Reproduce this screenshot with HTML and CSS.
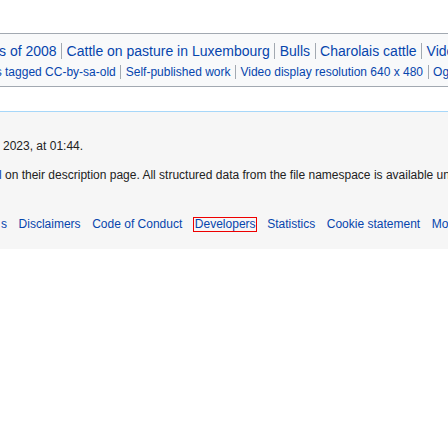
FILE: index.html
```html
<!DOCTYPE html>
<html>
<head>
<meta charset="utf-8">
<link rel="stylesheet" href="styles.css">
</head>
<body>
<div class="content">
  <div class="catlinks">
    <ul class="cats normal">
      <li class="first"><a href="#">s of 2008</a></li>
      <li><a href="#">Cattle on pasture in Luxembourg</a></li>
      <li><a href="#">Bulls</a></li>
      <li><a href="#">Charolais cattle</a></li>
      <li><a href="#">Videos of cattle</a></li>
    </ul>
    <ul class="cats hidden">
      <li class="first"><a href="#">s tagged CC-by-sa-old</a></li>
      <li><a href="#">Self-published work</a></li>
      <li><a href="#">Video display resolution 640 x 480</a></li>
      <li><a href="#">Ogg files</a></li>
    </ul>
  </div>
</div>
<div class="footer">
  <ul class="info">
    <li class="edited">2023, at 01:44.</li>
    <li class="license"><a href="#">l</a> on their description page. All structured data from the file namespace is available under the Creative Commons CC0 License.</li>
  </ul>
  <ul class="places">
    <li><a href="#">s</a></li>
    <li><a href="#">Disclaimers</a></li>
    <li><a href="#">Code of Conduct</a></li>
    <li class="focus"><a href="#">Developers</a></li>
    <li><a href="#">Statistics</a></li>
    <li><a href="#">Cookie statement</a></li>
    <li><a href="#">Mobile view</a></li>
  </ul>
</div>
</body>
</html>
```
FILE: styles.css
```css
html, body {
  margin: 0;
  padding: 0;
  background: #ffffff;
  overflow: hidden;
  font-family: "Liberation Sans", Arial, sans-serif;
  color: #222222;
}
a {
  color: #0645ad;
  text-decoration: none;
}
ul {
  list-style: none;
  margin: 0;
  padding: 0;
}
.content {
  height: 112px;
  box-sizing: border-box;
  padding-top: 33px;
  border-bottom: 1px solid #a7d7f9;
  background: #ffffff;
}
.catlinks {
  margin-left: -20px;
  width: 900px;
  height: 54px;
  box-sizing: border-box;
  border: 1px solid #a2a9b1;
  background: #f8f9fa;
  display: flex;
  flex-direction: column;
  padding-top: 9px;
  gap: 6px;
  white-space: nowrap;
}
.cats {
  display: flex;
}
.cats li {
  border-left: 1px solid #a2a9b1;
  padding: 0 4.5px;
}
.cats li.first {
  border-left: none;
}
.normal {
  font-size: 14px;
  line-height: 16px;
  margin-left: 13.5px;
}
.hidden {
  font-size: 12px;
  line-height: 14px;
  margin-left: 10.2px;
}
.footer {
  background: #f6f6f6;
  height: 137px;
  font-size: 12px;
  white-space: nowrap;
}
.info li {
  line-height: 17px;
  padding: 6px 0;
}
.info li.edited {
  margin-left: 3px;
  padding-top: 26px;
}
.info li.license {
  margin-left: -1px;
}
.places {
  display: flex;
  align-items: center;
  gap: 11.6px;
  height: 15px;
  margin-top: 27px;
  margin-left: 1px;
}
.places li {
  line-height: 15px;
}
.places li.focus {
  line-height: 13px;
  border: 1px solid #ee0000;
  padding: 0 0 0 1px;
  margin-left: -1px;
  margin-right: -1px;
}
```
